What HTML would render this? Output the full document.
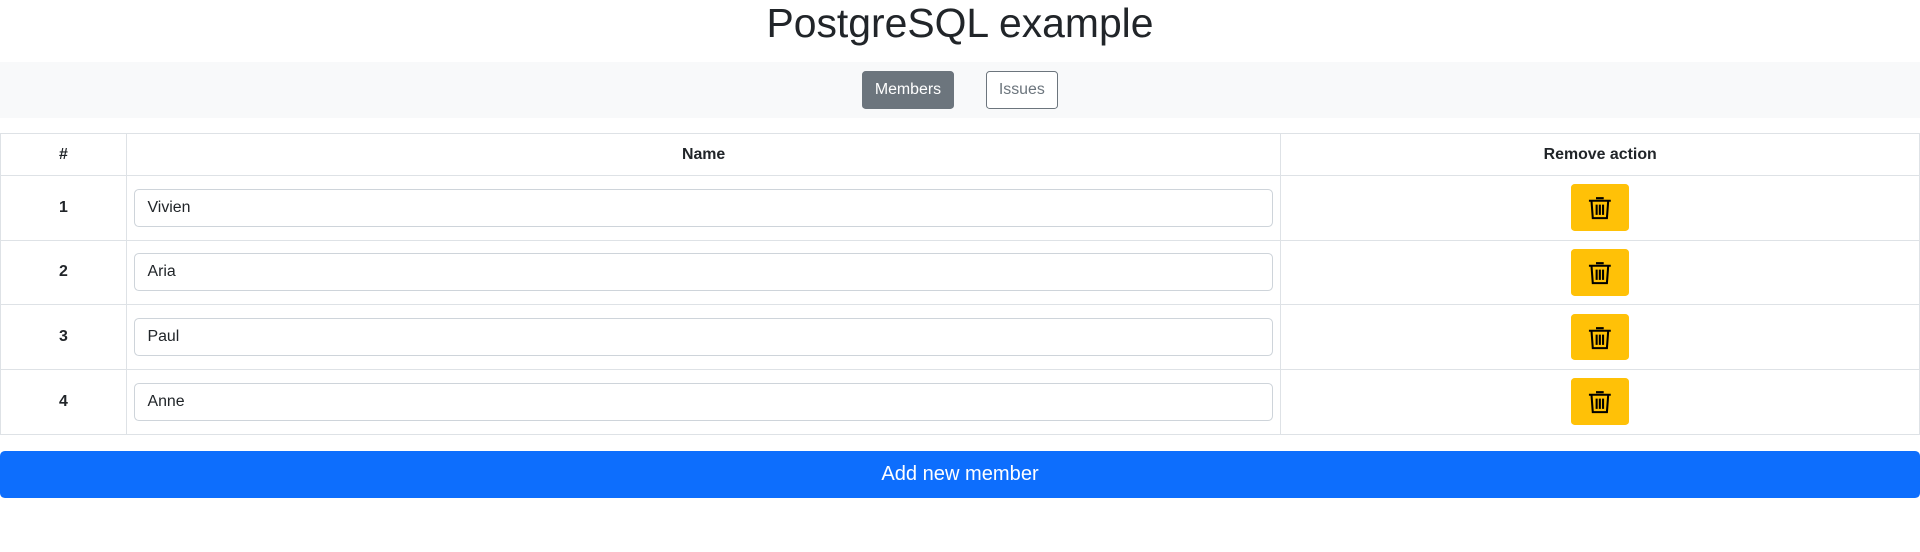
<!DOCTYPE html>
<html><head><style>
html,body{margin:0;padding:0;background:#fff;}
body{zoom:1.2245;width:1568px;font-family:"Liberation Sans",sans-serif;color:#212529;}
h1{margin:0;height:51px;font-size:33.4px;font-weight:400;text-align:center;line-height:39px;}
.nav{height:45px;background:#f8f9fa;position:relative;}
.btn{position:absolute;top:7px;height:31px;box-sizing:border-box;border-radius:3px;font-size:13px;line-height:29px;text-align:center;}
.m{left:704px;width:75px;background:#6c757d;color:#fff;border:1px solid #6c757d;}
.i{left:805px;width:59px;background:#fff;color:#6c757d;border:1px solid #6c757d;}
table{position:absolute;top:109px;left:0;width:1568px;border-collapse:collapse;font-size:13px;}
td,th{border:1px solid #dee2e6;padding:0;text-align:center;}
th{height:33px;font-weight:700;}
td{height:52px;}
td.n{font-weight:700;}
.inp{margin:0 6px;height:31px;box-sizing:border-box;border:1px solid #ced4da;border-radius:4px;text-align:left;padding-left:10px;line-height:29px;font-size:13px;}
.tb{display:inline-block;width:47px;height:38px;background:#ffc107;border-radius:3px;vertical-align:middle;position:relative;}
.tb svg{position:absolute;left:13px;top:9px;}
.add{position:absolute;top:368px;left:0;width:1568px;height:39px;background:#0d6efd;color:#fff;border-radius:4px;font-size:16.4px;line-height:39px;text-align:center;}
</style></head><body>
<h1>PostgreSQL example</h1>
<div class="nav"><div class="btn m">Members</div><div class="btn i">Issues</div></div>
<table>
<tr><th style="width:102px">#</th><th style="width:942px">Name</th><th>Remove action</th></tr>
<tr><td class="n">1</td><td><div class="inp">Vivien</div></td><td><span class="tb"><svg width="21" height="21" viewBox="0 0 20 20"><path d="M7 2.5h6M1.5 4.5h17M3.5 4.5l1 13.5h11l1-13.5M7.5 7.5v8M10 7.5v8M12.5 7.5v8" fill="none" stroke="#000" stroke-width="1.6"/></svg></span></td></tr>
<tr><td class="n">2</td><td><div class="inp">Aria</div></td><td><span class="tb"><svg width="21" height="21" viewBox="0 0 20 20"><path d="M7 2.5h6M1.5 4.5h17M3.5 4.5l1 13.5h11l1-13.5M7.5 7.5v8M10 7.5v8M12.5 7.5v8" fill="none" stroke="#000" stroke-width="1.6"/></svg></span></td></tr>
<tr><td class="n">3</td><td><div class="inp">Paul</div></td><td><span class="tb"><svg width="21" height="21" viewBox="0 0 20 20"><path d="M7 2.5h6M1.5 4.5h17M3.5 4.5l1 13.5h11l1-13.5M7.5 7.5v8M10 7.5v8M12.5 7.5v8" fill="none" stroke="#000" stroke-width="1.6"/></svg></span></td></tr>
<tr><td class="n">4</td><td><div class="inp">Anne</div></td><td><span class="tb"><svg width="21" height="21" viewBox="0 0 20 20"><path d="M7 2.5h6M1.5 4.5h17M3.5 4.5l1 13.5h11l1-13.5M7.5 7.5v8M10 7.5v8M12.5 7.5v8" fill="none" stroke="#000" stroke-width="1.6"/></svg></span></td></tr>
</table>
<div class="add">Add new member</div>
</body></html>
